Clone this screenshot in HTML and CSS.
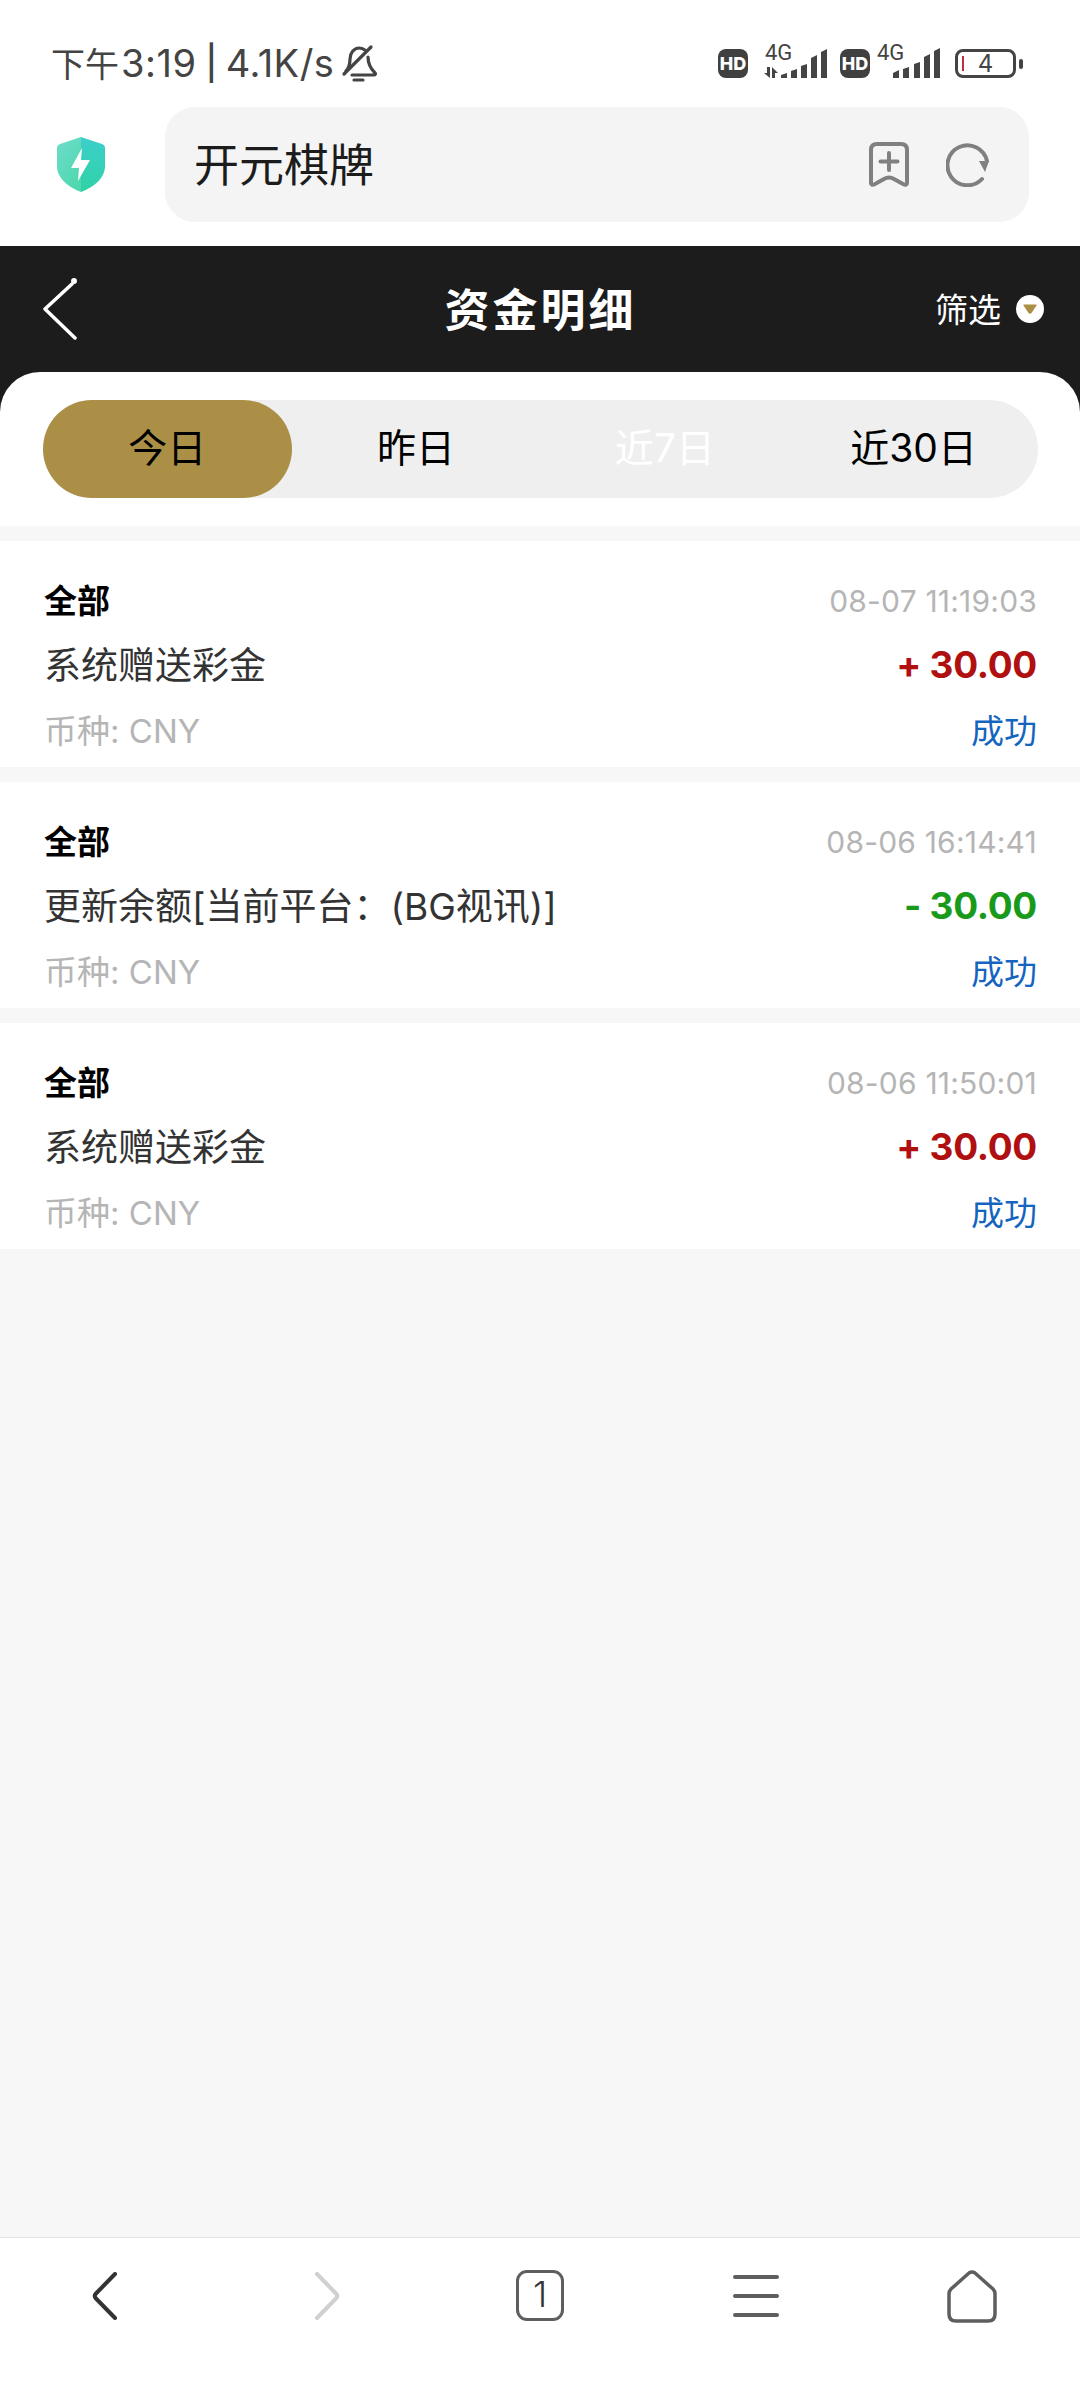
FILE: index.html
```html
<!DOCTYPE html>
<html lang="zh-CN">
<head>
    <meta charset="UTF-8">
    <meta name="viewport" content="width=device-width, initial-scale=1.0">
    <title>资金明细</title>
    <link rel="stylesheet" href="styles.css">
</head>
<body>
<div class="page">

    <div class="status-bar">
        <div class="status-left">
            <span class="status-cjk">下午</span>
            <span>3:19</span>
            <span class="status-sep">|</span>
            <span>4.1K/s</span>
            <svg class="bell" width="36" height="38" viewBox="0 0 36 38" fill="none" stroke="#444" stroke-width="3.200" stroke-linecap="round" stroke-linejoin="round">
                <path d="M5 27c3-3 4-7 4-12 0-6 4-11 9-11 2 0 4 .7 6 2"/>
                <path d="M27 13c0 6 2 11 7 16 1 1 0 2-1 2H11"/>
                <path d="M3 30 30 3"/>
                <path d="M13 36h9"/>
            </svg>
        </div>
        <div class="status-right">
            <span class="hd">HD</span>
            <svg class="sig sig-data" width="65" height="40" viewBox="0 -6 65 40" fill="#444">
                <text x="3" y="15" class="sig-label">4G</text>
                <path d="M5 22h3v11L2 28h3zM10 33V22l6 6h-3v5z"/>
                <path d="M19 30l6-2v5h-6zM29 26l6-2v9h-6zM39 21l6-2v14h-6zM49 13l6-3v23h-6zM59 7l6-3v29h-6z"/>
            </svg>
            <span class="hd hd-second">HD</span>
            <svg class="sig sig-plain" width="63" height="40" viewBox="0 -6 63 40" fill="#444">
                <text x="0" y="15" class="sig-label">4G</text>
                <path d="M16 28l6-3v8h-6zM26 24l6-2v11h-6zM37 19l6-2v16h-6zM47 12l6-3v24h-6zM57 6l6-3v30h-6z"/>
            </svg>
            <div class="battery"><i class="battery-level"></i><span>4</span></div>
            <i class="battery-nub"></i>
        </div>
    </div>

    <div class="address-row">
        <svg class="shield" width="48" height="55" viewBox="0 0 48 55">
            <defs>
                <linearGradient id="shieldLeft" x1="0" y1="0" x2="0.6" y2="1">
                    <stop offset="0" stop-color="#6fdccd"/>
                    <stop offset="1" stop-color="#4fd8ae"/>
                </linearGradient>
                <linearGradient id="shieldRight" x1="0" y1="0" x2="0" y2="1">
                    <stop offset="0" stop-color="#3ccfcb"/>
                    <stop offset="1" stop-color="#2fd2a6"/>
                </linearGradient>
            </defs>
            <path d="M24 0 3 7Q0 8 0 11v18c0 12 11 21 24 26z" fill="url(#shieldLeft)"/>
            <path d="M24 0l21 7q3 1 3 4v18c0 12-11 21-24 26z" fill="url(#shieldRight)"/>
            <path d="M25 11 14 31h8l-1 13 12-21h-9z" fill="#fff"/>
        </svg>
        <div class="address-bar">
            <span class="address-text">开元棋牌</span>
            <svg class="bookmark" width="42" height="47" viewBox="0 0 42 47" fill="none" stroke="#808080" stroke-width="4" stroke-linecap="round" stroke-linejoin="round">
                <path d="M9 3h24q6 0 6 6v33q0 3-4 1l-9-5q-5-3-10 0l-9 5q-4 2-4-1V9q0-6 6-6z"/>
                <path d="M21 12v17M12.500 20.500h17"/>
            </svg>
            <svg class="refresh" width="44" height="44" viewBox="0 0 44 44" fill="none" stroke="#808080" stroke-width="4" stroke-linecap="round">
                <path d="M36 36A20 20 0 1 1 41 18"/>
                <path d="M33 18h10l-4 11z" fill="#808080" stroke="none"/>
            </svg>
        </div>
    </div>

    <div class="app-header">
        <div class="nav-row">
            <svg class="nav-back" width="36" height="62" viewBox="0 0 36 62" fill="none" stroke="#fff" stroke-width="3.500" stroke-linecap="round" stroke-linejoin="round">
                <path d="M30 6 3 31l30 29"/>
                <circle cx="32" cy="3" r="1.200" fill="#fff"/>
            </svg>
            <div class="nav-title">资金明细</div>
            <div class="nav-filter">
                <span>筛选</span>
                <svg width="28" height="28" viewBox="0 0 28 28">
                    <circle cx="14" cy="14" r="14" fill="#fff"/>
                    <path d="M8 9.500h12q1 0 .5 1l-5 7.500q-1.500 1.500-3 0l-5-7.500q-.5-1 .5-1z" fill="#ac8f47"/>
                </svg>
            </div>
        </div>
        <div class="panel">
            <div class="tabs">
                <div class="tab tab-active">今日</div>
                <div class="tab">昨日</div>
                <div class="tab tab-white">近7日</div>
                <div class="tab">近30日</div>
            </div>
        </div>
    </div>

    <div class="records">
        <div class="record">
            <div class="record-line">
                <span class="record-type">全部</span>
                <span class="record-time">08-07 11:19:03</span>
            </div>
            <div class="record-line">
                <span class="record-name">系统赠送彩金</span>
                <span class="record-amount plus">+ 30.00</span>
            </div>
            <div class="record-line">
                <span class="record-currency">币种: CNY</span>
                <span class="record-state">成功</span>
            </div>
        </div>
        <div class="record">
            <div class="record-line">
                <span class="record-type">全部</span>
                <span class="record-time">08-06 16:14:41</span>
            </div>
            <div class="record-line">
                <span class="record-name">更新余额[当前平台：(BG视讯)]</span>
                <span class="record-amount minus">- 30.00</span>
            </div>
            <div class="record-line">
                <span class="record-currency">币种: CNY</span>
                <span class="record-state">成功</span>
            </div>
        </div>
        <div class="record">
            <div class="record-line">
                <span class="record-type">全部</span>
                <span class="record-time">08-06 11:50:01</span>
            </div>
            <div class="record-line">
                <span class="record-name">系统赠送彩金</span>
                <span class="record-amount plus">+ 30.00</span>
            </div>
            <div class="record-line">
                <span class="record-currency">币种: CNY</span>
                <span class="record-state">成功</span>
            </div>
        </div>
    </div>

    <div class="bottom-nav">
        <svg width="26" height="48" viewBox="0 0 26 48" fill="none" stroke="#333" stroke-width="4" stroke-linecap="round" stroke-linejoin="round" class="shift-left">
            <path d="M23 2 3.500 22q-1.500 2 0 4L23 46"/>
        </svg>
        <svg width="26" height="48" viewBox="0 0 26 48" fill="none" stroke="#d0d0d0" stroke-width="4" stroke-linecap="round" stroke-linejoin="round" class="shift-right">
            <path d="M3 2l19.500 20q1.500 2 0 4L3 46"/>
        </svg>
        <div class="tab-count">1</div>
        <svg class="menu-icon" width="46" height="44" viewBox="0 0 46 44" fill="none" stroke="#5e5e5e" stroke-width="4" stroke-linecap="round">
            <path d="M2 3h42M2 22h42M2 41h42"/>
        </svg>
        <svg width="50" height="53" viewBox="0 0 50 53" fill="none" stroke="#5e5e5e" stroke-width="3.500" stroke-linejoin="round">
            <path d="M22 3 4 19q-2 2-2 5v20q0 7 7 7h32q7 0 7-7V24q0-3-2-5L28 3q-3-2-6 0z"/>
        </svg>
    </div>

</div>
</body>
</html>
```

FILE: styles.css
```css
* {
    box-sizing: border-box;
}

body {
    margin: 0;
    font-family: Inter, 'Noto Sans CJK SC', sans-serif;
    background-color: #fff;
}

.page {
    display: flex;
    flex-direction: column;
    width: 1080px;
    height: 2400px;
    overflow: hidden;
}

/* status bar */
.status-bar {
    display: flex;
    justify-content: space-between;
    align-items: center;
    height: 107px;
    padding: 18px 57px 0 51px;
    color: #444;
}

.status-left {
    display: flex;
    align-items: center;
    font-size: 38px;
    letter-spacing: 0.5px;
}

.status-cjk {
    margin-right: 2px;
    font-size: 34px;
    letter-spacing: 0;
}

.status-sep {
    margin: 0 8px 0 9px;
    font-size: 34px;
    font-weight: 500;
}

.bell {
    margin-left: 7px;
}

.status-right {
    display: flex;
    align-items: center;
    padding-top: 2px;
}

.hd {
    width: 30px;
    height: 29px;
    border-radius: 8px;
    background-color: #404040;
    color: #fff;
    font-size: 18px;
    font-weight: 800;
    line-height: 29px;
    text-align: center;
}

.sig {
    margin-top: -9px;
}

.sig-data {
    margin-left: 14px;
}

.hd-second {
    margin-left: 13px;
}

.sig-plain {
    margin-left: 7px;
}

.sig-label {
    font-family: Roboto, sans-serif;
    font-size: 22px;
}

.battery {
    position: relative;
    width: 61px;
    height: 29px;
    margin-left: 15px;
    border: 3px solid #444;
    border-radius: 8px;
    font-size: 24px;
    line-height: 23px;
    text-align: center;
}

.battery-level {
    position: absolute;
    left: 4px;
    top: 4px;
    width: 2px;
    height: 15px;
    background-color: #c0303a;
}

.battery-nub {
    width: 4px;
    height: 10px;
    margin-left: 3px;
    border-radius: 2px;
    background-color: #444;
}

/* address bar */
.address-row {
    display: flex;
    align-items: flex-start;
    height: 139px;
    padding: 0 51px 0 57px;
}

.shield {
    flex: none;
    margin-top: 30px;
}

.address-bar {
    display: flex;
    flex: 1;
    align-items: center;
    height: 115px;
    margin-left: 60px;
    padding: 0 39px 0 29px;
    border-radius: 30px;
    background-color: #f4f4f4;
}

.address-text {
    flex: 1;
    margin-top: -5px;
    color: #1c1c1c;
    font-size: 45px;
}

.refresh {
    margin-left: 36px;
}

/* page header */
.app-header {
    background-color: #1c1c1c;
}

.nav-row {
    display: grid;
    grid-template-columns: 1fr auto 1fr;
    align-items: center;
    height: 126px;
    padding: 0 36px 0 42px;
    color: #fff;
}

.nav-title {
    margin: -3px 0 0 -5px;
    font-size: 45px;
    font-weight: 700;
    letter-spacing: 3px;
}

.nav-filter {
    display: flex;
    justify-content: flex-end;
    align-items: center;
    gap: 15px;
    font-size: 33px;
}

.nav-filter span {
    margin-top: -3px;
}

.panel {
    height: 154px;
    padding: 28px 42px 28px 43px;
    border-radius: 40px 40px 0 0;
    background-color: #fff;
}

.tabs {
    display: grid;
    grid-template-columns: repeat(4, 1fr);
    height: 98px;
    border-radius: 49px;
    background-color: #efefef;
}

.tab {
    color: #000;
    font-size: 39px;
    line-height: 96px;
    text-align: center;
}

.tab-active {
    border-radius: 49px;
    background-color: #ac8f47;
}

.tab-white {
    color: #fff;
}

/* records */
.records {
    display: flex;
    flex: 1;
    flex-direction: column;
    gap: 15px;
    padding-top: 15px;
    background-color: #f7f7f7;
}

.record {
    height: 226px;
    padding: 27px 43px 4px 44px;
    background-color: #fff;
}

.record-line {
    display: flex;
    justify-content: space-between;
    align-items: center;
    height: 65px;
}

.record-type {
    margin-top: -4px;
    color: #000;
    font-size: 33px;
    font-weight: 700;
}

.record-time {
    color: #b5b5b5;
    font-size: 30px;
    letter-spacing: 0.2px;
}

.record-name {
    margin-top: -6px;
    color: #333;
    font-size: 37px;
}

.record-amount {
    margin-top: -2px;
    font-size: 37px;
    font-weight: 700;
    letter-spacing: -0.3px;
}

.plus {
    color: #b01010;
}

.minus {
    color: #1a9a1a;
}

.record-currency {
    margin-top: -4px;
    color: #b5b5b5;
    font-size: 33px;
}

.record-state {
    margin-top: -4px;
    color: #1565c0;
    font-size: 33px;
}

/* bottom toolbar */
.bottom-nav {
    display: grid;
    grid-template-columns: repeat(5, 216px);
    justify-items: center;
    align-items: start;
    height: 163px;
    padding-top: 32px;
    border-top: 1px solid #e4e4e4;
    background-color: #fff;
}

.bottom-nav svg {
    display: block;
}

.shift-left {
    margin: 2px 6px 0 0;
}

.shift-right {
    margin: 2px 0 0 6px;
}

.menu-icon {
    margin-top: 4px;
}

.tab-count {
    width: 48px;
    height: 51px;
    border: 3.500px solid #5e5e5e;
    border-radius: 11px;
    color: #333;
    font-size: 36px;
    font-weight: 300;
    line-height: 43px;
    text-align: center;
}
```
